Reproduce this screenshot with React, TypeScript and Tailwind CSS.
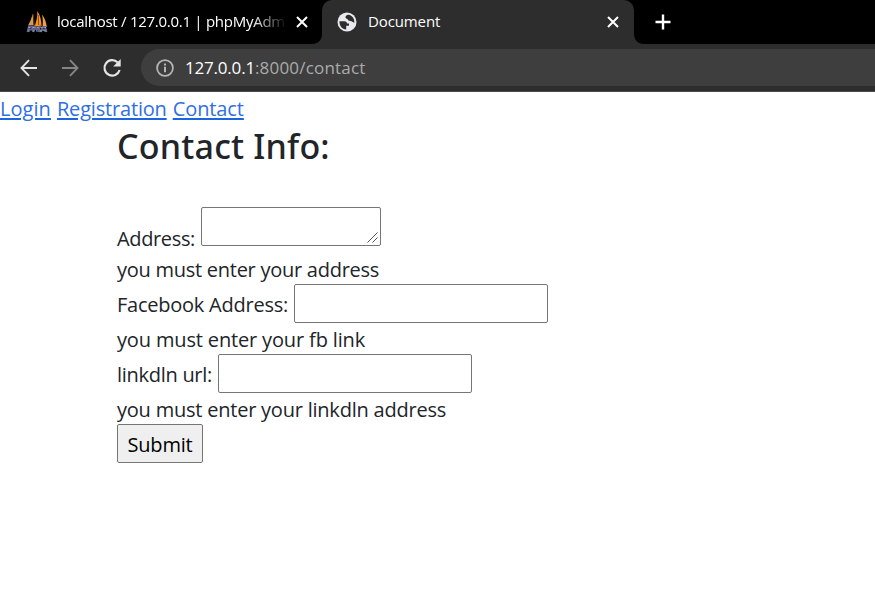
import type { ReactNode } from "react";

function SailIcon() {
  return (
    <svg width="24" height="24" viewBox="0 0 24 24" className="shrink-0">
      <path d="M7.600 3.500 8.600 15 3 15.500C5 12 6.800 8 7.600 3.500Z" fill="#d99a55" />
      <path d="M12.300 1C15.200 5 16.400 10 16.600 16.500L9.600 16.500C11.600 11 12.600 6 12.300 1Z" fill="#f8931f" />
      <path d="M17 4.500C19.800 8 21.200 12 21.800 17L17.600 16.500C18 11.500 17.800 8 17 4.500Z" fill="#f0a040" />
      <path d="M8.200 4 9.300 15M13.300 5 13.600 15" stroke="#6b3f12" strokeWidth=".8" />
      <path d="M2.500 22 4 16.500H7.800L7 19.500H3.500M8.500 22 9.800 17 11.500 19.500 14.500 17 13.800 22M15.500 22 18 17H20L21.500 22M17 20H21" fill="none" stroke="#62678f" strokeWidth="2" />
      <path d="M3.500 17.500H21M3 21H21" stroke="#c5c6d4" strokeWidth=".7" strokeDasharray="2 2" />
    </svg>
  );
}

function GlobeIcon() {
  return (
    <svg width="20" height="20" viewBox="0 0 20 20" className="shrink-0">
      <circle cx="10" cy="10" r="9.500" fill="#e8eaed" />
      <path d="M11.500 2.700C9.500 3 8.300 4 8.500 5.500C8.700 6.900 10.600 6.500 11 7.800C11.400 9.200 13 8.800 14.500 9.300C15.900 9.800 16.300 10.800 17.400 10.600C17.600 6.500 15.200 3.400 11.500 2.700Z" fill="#2d2d2d" />
      <path d="M2.500 9.300H7.300C9.200 9.300 10 10.300 10 11.600H12V13.800H9.200V17.500C5.100 17.400 2.100 13.700 2.500 9.300Z" fill="#2d2d2d" />
    </svg>
  );
}

function CloseIcon() {
  return (
    <svg width="12" height="12" viewBox="0 0 12 12" className="shrink-0" stroke="#fff" strokeWidth="2">
      <path d="M1 1 11 11M11 1 1 11" />
    </svg>
  );
}

function TabFlare({ flip = false }: { flip?: boolean }) {
  return (
    <svg width="10" height="10" viewBox="0 0 10 10" className={flip ? "shrink-0 -scale-x-100" : "shrink-0"}>
      <path d="M10 0V10H0C6 10 10 6 10 0Z" fill="#2d2d2d" />
    </svg>
  );
}

function TabStrip() {
  return (
    <div className="flex h-11 bg-black text-[15px] text-white">
      <div className="flex w-[312px] shrink-0 items-center pl-[25px]">
        <SailIcon />
        <div className="ml-2 w-[230px] whitespace-nowrap pb-0.5 tracking-[-0.27px] [mask-image:linear-gradient(to_right,black_195px,transparent_230px)]">
          localhost / 127.0.0.1 | phpMyAdm
        </div>
        <div className="ml-[9px]"><CloseIcon /></div>
      </div>
      <div className="flex items-end"><TabFlare /></div>
      <div className="flex w-[312px] shrink-0 items-center rounded-t-[10px] bg-[#2d2d2d] pl-[15px] pr-[15px]">
        <GlobeIcon />
        <span className="ml-[11px] flex-1 pb-0.5 tracking-[-0.12px]">Document</span>
        <CloseIcon />
      </div>
      <div className="flex items-end"><TabFlare flip /></div>
      <div className="flex items-center pl-[11px]">
        <svg width="16" height="16" viewBox="0 0 16 16" stroke="#fff" strokeWidth="2.400">
          <path d="M8 .5V15.500M.5 8H15.500" />
        </svg>
      </div>
    </div>
  );
}

function Toolbar() {
  return (
    <div className="flex h-12 border-b border-[#4a4a4a] bg-[#2d2d2d] pt-[5px]">
      <div className="flex h-[37px] w-[141px] shrink-0 items-center pl-5">
        <svg width="18" height="18" viewBox="0 0 18 18" fill="none" stroke="#e4e4e4" strokeWidth="1.900">
          <path d="M17 9H2M9 1.200 1.500 9 9 16.800" />
        </svg>
        <svg width="18" height="18" viewBox="0 0 18 18" fill="none" stroke="#858585" strokeWidth="1.900" className="ml-[23px]">
          <path d="M1 9H16M9 1.200 16.500 9 9 16.800" />
        </svg>
        <svg width="20" height="20" viewBox="0 0 20 20" fill="none" className="ml-[23px]">
          <path d="M15.700 4.500A7.700 7.700 0 1 0 17.600 12" stroke="#e4e4e4" strokeWidth="2.200" />
          <path d="M18.700 1V8.500H11.200Z" fill="#e4e4e4" />
        </svg>
      </div>
      <div className="flex h-[37px] flex-1 items-center rounded-l-full bg-[#3e3e3e] pl-[15px] text-[17px]">
        <svg width="18" height="18" viewBox="0 0 18 18" fill="none" className="shrink-0">
          <circle cx="9" cy="9" r="7.900" stroke="#b5b5b5" strokeWidth="1.800" />
          <path d="M9 4.500V6.500M9 7.800V13.300" stroke="#b5b5b5" strokeWidth="2" />
        </svg>
        <span className="ml-[11px] tracking-[-0.2px] text-white">127.0.0.1</span>
        <span className="tracking-[0.2px] text-[#ababab]">:8000/contact</span>
      </div>
    </div>
  );
}

function Row({ children }: { children: ReactNode }) {
  return <div className="flex h-[35px] items-center whitespace-nowrap">{children}</div>;
}

const field = "h-[39px] w-[254px] shrink-0 rounded-[2px] border border-[#767676] bg-white outline-none";
const link = "underline decoration-[#1a66e0] decoration-[2px] underline-offset-[2px]";

export default function App() {
  return (
    <div className="h-[609px] w-[875px] overflow-hidden bg-white font-['Open_Sans','Noto_Sans',sans-serif] text-[20px] leading-[35px] text-[#212529]">
      <TabStrip />
      <Toolbar />
      <nav className="flex h-[33px] gap-[6px] leading-[33px] text-[#2f6fe4]">
        <a className={`${link} tracking-[0.06px]`}>Login</a>
        <a className={`${link} tracking-[-0.18px]`}>Registration</a>
        <a className={`${link} tracking-[-0.1px]`}>Contact</a>
      </nav>
      <main className="pl-[117px]">
        <h2 className="h-[82px] font-['Noto_Sans',sans-serif] text-[34px] font-medium leading-[42px] tracking-[0.2px]">Contact Info:</h2>
        <form>
          <div className="flex h-[44px] items-start">
            <label className="mt-[14px] w-[84px] tracking-[-0.36px]">Address:</label>
            <div className="flex h-[39px] w-[180px] items-end justify-end rounded-[2px] border border-[#767676] bg-white p-[2px]">
              <svg width="11" height="11" viewBox="0 0 11 11" stroke="#555" strokeWidth="1">
                <path d="M.5 10.500 10.500 .5M5.500 10.500 10.500 5.500" />
              </svg>
            </div>
          </div>
          <Row><span className="pt-0.5 tracking-[-0.26px]">you must enter your address</span></Row>
          <Row>
            <label className="w-[177px] pt-0.5 tracking-[-0.24px]">Facebook Address:</label>
            <input className={field} />
          </Row>
          <Row><span className="pt-0.5 tracking-[-0.15px]">you must enter your fb link</span></Row>
          <Row>
            <label className="w-[101px] pt-0.5 tracking-[-0.28px]">linkdln url:</label>
            <input className={field} />
          </Row>
          <Row><span className="pt-0.5 tracking-[-0.22px]">you must enter your linkdln address</span></Row>
          <Row>
            <button type="button" className="h-[39px] w-[86px] shrink-0 rounded-[2px] border border-[#767676] bg-[#efefef] pt-0.5 tracking-[-0.2px] text-black">
              Submit
            </button>
          </Row>
        </form>
      </main>
    </div>
  );
}
